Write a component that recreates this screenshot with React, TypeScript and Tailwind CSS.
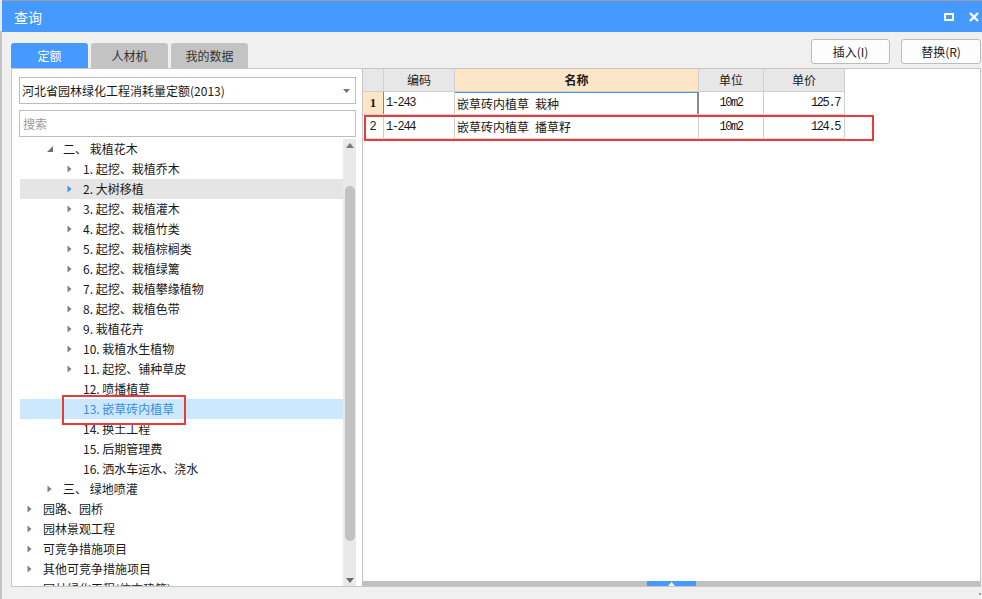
import React from "react";

type Node = { l: 0 | 1 | 2; t: string; a?: "open" | "closed"; hover?: boolean; sel?: boolean };

const tree: Node[] = [
  { l: 1, t: "二、 栽植花木", a: "open" },
  { l: 2, t: "1. 起挖、栽植乔木", a: "closed" },
  { l: 2, t: "2. 大树移植", a: "closed", hover: true },
  { l: 2, t: "3. 起挖、栽植灌木", a: "closed" },
  { l: 2, t: "4. 起挖、栽植竹类", a: "closed" },
  { l: 2, t: "5. 起挖、栽植棕榈类", a: "closed" },
  { l: 2, t: "6. 起挖、栽植绿篱", a: "closed" },
  { l: 2, t: "7. 起挖、栽植攀缘植物", a: "closed" },
  { l: 2, t: "8. 起挖、栽植色带", a: "closed" },
  { l: 2, t: "9. 栽植花卉", a: "closed" },
  { l: 2, t: "10. 栽植水生植物", a: "closed" },
  { l: 2, t: "11. 起挖、铺种草皮", a: "closed" },
  { l: 2, t: "12. 喷播植草" },
  { l: 2, t: "13. 嵌草砖内植草", sel: true },
  { l: 2, t: "14. 换土工程" },
  { l: 2, t: "15. 后期管理费" },
  { l: 2, t: "16. 洒水车运水、浇水" },
  { l: 1, t: "三、 绿地喷灌", a: "closed" },
  { l: 0, t: "园路、园桥", a: "closed" },
  { l: 0, t: "园林景观工程", a: "closed" },
  { l: 0, t: "可竞争措施项目", a: "closed" },
  { l: 0, t: "其他可竞争措施项目", a: "closed" },
  { l: 0, t: "园林绿化工程(仿古建筑)", a: "closed" },
];

const padCls = { 0: "pl-[7px]", 1: "pl-[27px]", 2: "pl-[47px]" } as const;

const cjk = { fontFamily: '"Noto Sans CJK SC", "Noto Sans", sans-serif' };
const mono = { fontFamily: '"Liberation Mono", "Noto Sans CJK SC", monospace' };

function Arrow({ kind, blue }: { kind?: "open" | "closed"; blue?: boolean }) {
  if (kind === "closed")
    return (
      <svg width="5" height="8" viewBox="0 0 5 8">
        <polygon points="0.5,0.5 4.5,4 0.5,7.5" fill={blue ? "#3d8fe8" : "#7f7f7f"} />
      </svg>
    );
  if (kind === "open")
    return (
      <svg width="6" height="6" viewBox="0 0 6 6">
        <polygon points="6,0 6,6 0,6" fill="#6f6f6f" />
      </svg>
    );
  return null;
}

export default function App() {
  return (
    <div className="w-[982px] h-[599px] flex overflow-hidden bg-[#f0f0f0] text-[12px] text-[#1a1a1a]" style={cjk}>
      {/* left backdrop strip */}
      <div className="w-[2px] flex flex-col">
        <div className="h-[31px] bg-[#e9e9e9]" />
        <div className="flex-1 bg-[#c4c4c4]" />
      </div>
      <div className="flex-1 flex flex-col">
        {/* title bar */}
        <div className="h-[32px] border-t border-[#9c9c9c] bg-[#4699fe] flex items-center pl-[12px] pr-[3px] text-white">
          <span className="text-[14px] leading-none mt-[1px]">查询</span>
          <div className="ml-auto flex items-center gap-[15px]">
            <div className="w-[10px] h-[8px] border-2 border-white" />
            <svg width="10" height="10" viewBox="0 0 10 10">
              <path d="M1 1 L9 9 M9 1 L1 9" stroke="white" strokeWidth="2.4" />
            </svg>
          </div>
        </div>
        {/* body */}
        <div className="flex-1 flex flex-col pl-[9px] pr-[1px]">
          <div className="h-[36px] flex justify-between">
            <div className="self-end flex gap-[3px]">
              <div className="w-[77px] h-[25px] rounded-t-[3px] bg-[#4699fe] text-white flex items-center justify-center">定额</div>
              <div className="w-[77px] h-[25px] rounded-t-[3px] bg-[#c3c3c3] text-[#333] flex items-center justify-center">人材机</div>
              <div className="w-[77px] h-[25px] rounded-t-[3px] bg-[#c3c3c3] text-[#333] flex items-center justify-center">我的数据</div>
            </div>
            <div className="self-start mt-[7px] flex gap-[11px]">
              <div className="w-[79px] h-[25px] rounded-[3px] border border-[#bcbcbc] bg-[#fdfdfd] flex items-center justify-center">插入(I)</div>
              <div className="w-[80px] h-[25px] rounded-[3px] border border-[#bcbcbc] bg-[#fdfdfd] flex items-center justify-center">替换(R)</div>
            </div>
          </div>
          {/* panels */}
          <div className="h-[519px] flex">
            {/* left panel */}
            <div className="w-[351px] bg-white border border-r-0 border-[#c6c6c6] flex flex-col">
              <div className="ml-[7px] mt-[8px] w-[337px] h-[27px] border border-[#bdbdbd] flex items-center pl-[2px] pr-[5px]">
                <span>河北省园林绿化工程消耗量定额(2013)</span>
                <svg className="ml-auto" width="7" height="4" viewBox="0 0 7 4">
                  <polygon points="0,0 7,0 3.5,4" fill="#777" />
                </svg>
              </div>
              <div className="ml-[7px] mt-[6px] w-[337px] h-[27px] border border-[#bdbdbd] flex items-center pl-[3px] text-[#9a9a9a]">
                搜索
              </div>
              <div className="mt-[2px] ml-[8px] flex-1 flex overflow-hidden">
                <div className="w-[323px] relative">
                  {tree.map((n, i) => (
                    <div
                      key={i}
                      className={`h-[20px] flex items-center ${padCls[n.l]} ${n.hover ? "bg-[#e5e5e5]" : ""} ${n.sel ? "bg-[#cce8ff] text-[#3b8de0]" : ""}`}
                    >
                      <div className="w-[16px] flex items-center">
                        <Arrow kind={n.a} blue={n.hover} />
                      </div>
                      <span className="whitespace-pre leading-none">{n.t}</span>
                    </div>
                  ))}
                  <div className="absolute left-[42px] top-[256px] w-[124px] h-[30px] border-[2.5px] border-[#ec3a3a]" />
                </div>
                <div className="w-[13px] bg-[#e9e9e9] flex flex-col items-center">
                  <svg className="mt-[4px]" width="8" height="5" viewBox="0 0 8 5">
                    <polygon points="0,5 8,5 4,0" fill="#7a7a7a" />
                  </svg>
                  <div className="mt-[38px] w-[10px] h-[355px] rounded-full bg-[#c1c1c1]" />
                  <svg className="mt-auto mb-[3px]" width="8" height="5" viewBox="0 0 8 5">
                    <polygon points="0,0 8,0 4,5" fill="#6a6a6a" />
                  </svg>
                </div>
                <div className="w-[6px]" />
              </div>
            </div>
            {/* right panel */}
            <div className="flex-1 bg-white border border-[#c6c6c6] flex flex-col relative">
              <div className="flex h-[23px] bg-[#e7e7e7] border-b border-[#cfcfcf] w-[482px]">
                <div className="w-[21px] border-r border-[#cfcfcf]" />
                <div className="w-[71px] border-r border-[#cfcfcf] flex items-center justify-center">编码</div>
                <div className="w-[244px] border-r border-[#cfcfcf] flex items-center justify-center bg-[#fde6c8] font-bold">名称</div>
                <div className="w-[65px] border-r border-[#cfcfcf] flex items-center justify-center">单位</div>
                <div className="w-[81px] border-r border-[#cfcfcf] flex items-center justify-center">单价</div>
              </div>
              <div className="flex h-[23px] border-b border-[#d4d4d4] w-[482px]">
                <div className="w-[21px] border-r border-[#3d94f6] bg-[#fde6c8] flex items-center justify-center font-bold text-[13px]" style={{ fontFamily: '"Liberation Serif", serif' }}>1</div>
                <div className="w-[71px] border-r border-[#cfcfcf] flex items-center pl-[2px] text-[12px] tracking-[-1.4px]" style={mono}>1-243</div>
                <div className="w-[244px] border-r-2 border-r-[#8a8a8a] border-t border-t-[#3d94f6] flex items-center pl-[2px] whitespace-pre">嵌草砖内植草{"\u2002"}栽种</div>
                <div className="w-[65px] border-r border-[#cfcfcf] flex items-center justify-center text-[12px] tracking-[-1.4px]" style={mono}>10m2</div>
                <div className="w-[81px] border-r border-[#cfcfcf] flex items-center justify-end pr-[4px] text-[12px] tracking-[-1.4px]" style={mono}>125.7</div>
              </div>
              <div className="flex h-[24px] border-b border-[#d4d4d4] w-[482px]">
                <div className="w-[21px] border-r border-[#cfcfcf] flex items-center justify-center text-[12px]" style={mono}>2</div>
                <div className="w-[71px] border-r border-[#cfcfcf] flex items-center pl-[2px] text-[12px] tracking-[-1.4px]" style={mono}>1-244</div>
                <div className="w-[244px] border-r border-[#cfcfcf] flex items-center pl-[2px] whitespace-pre">嵌草砖内植草{"\u2002"}播草籽</div>
                <div className="w-[65px] border-r border-[#cfcfcf] flex items-center justify-center text-[12px] tracking-[-1.4px]" style={mono}>10m2</div>
                <div className="w-[81px] border-r border-[#cfcfcf] flex items-center justify-end pr-[4px] text-[12px] tracking-[-1.4px]" style={mono}>124.5</div>
              </div>
              <div className="absolute left-[1px] top-[46px] w-[510px] h-[26px] border-[2.5px] border-[#ec3a3a]" />
              <div className="mt-auto h-[5px] bg-[#c0c0c0] flex">
                <div className="ml-[284px] w-[49px] h-[5px] bg-[#4699fe] flex items-end justify-center">
                  <svg width="7" height="4" viewBox="0 0 7 4">
                    <polygon points="0,4 7,4 3.5,0" fill="white" />
                  </svg>
                </div>
              </div>
            </div>
          </div>
          <div className="flex-1 flex justify-end items-end pb-[4px]">
            <div className="w-[2px] h-[2px] bg-[#9a9a9a]" />
          </div>
        </div>
      </div>
    </div>
  );
}
